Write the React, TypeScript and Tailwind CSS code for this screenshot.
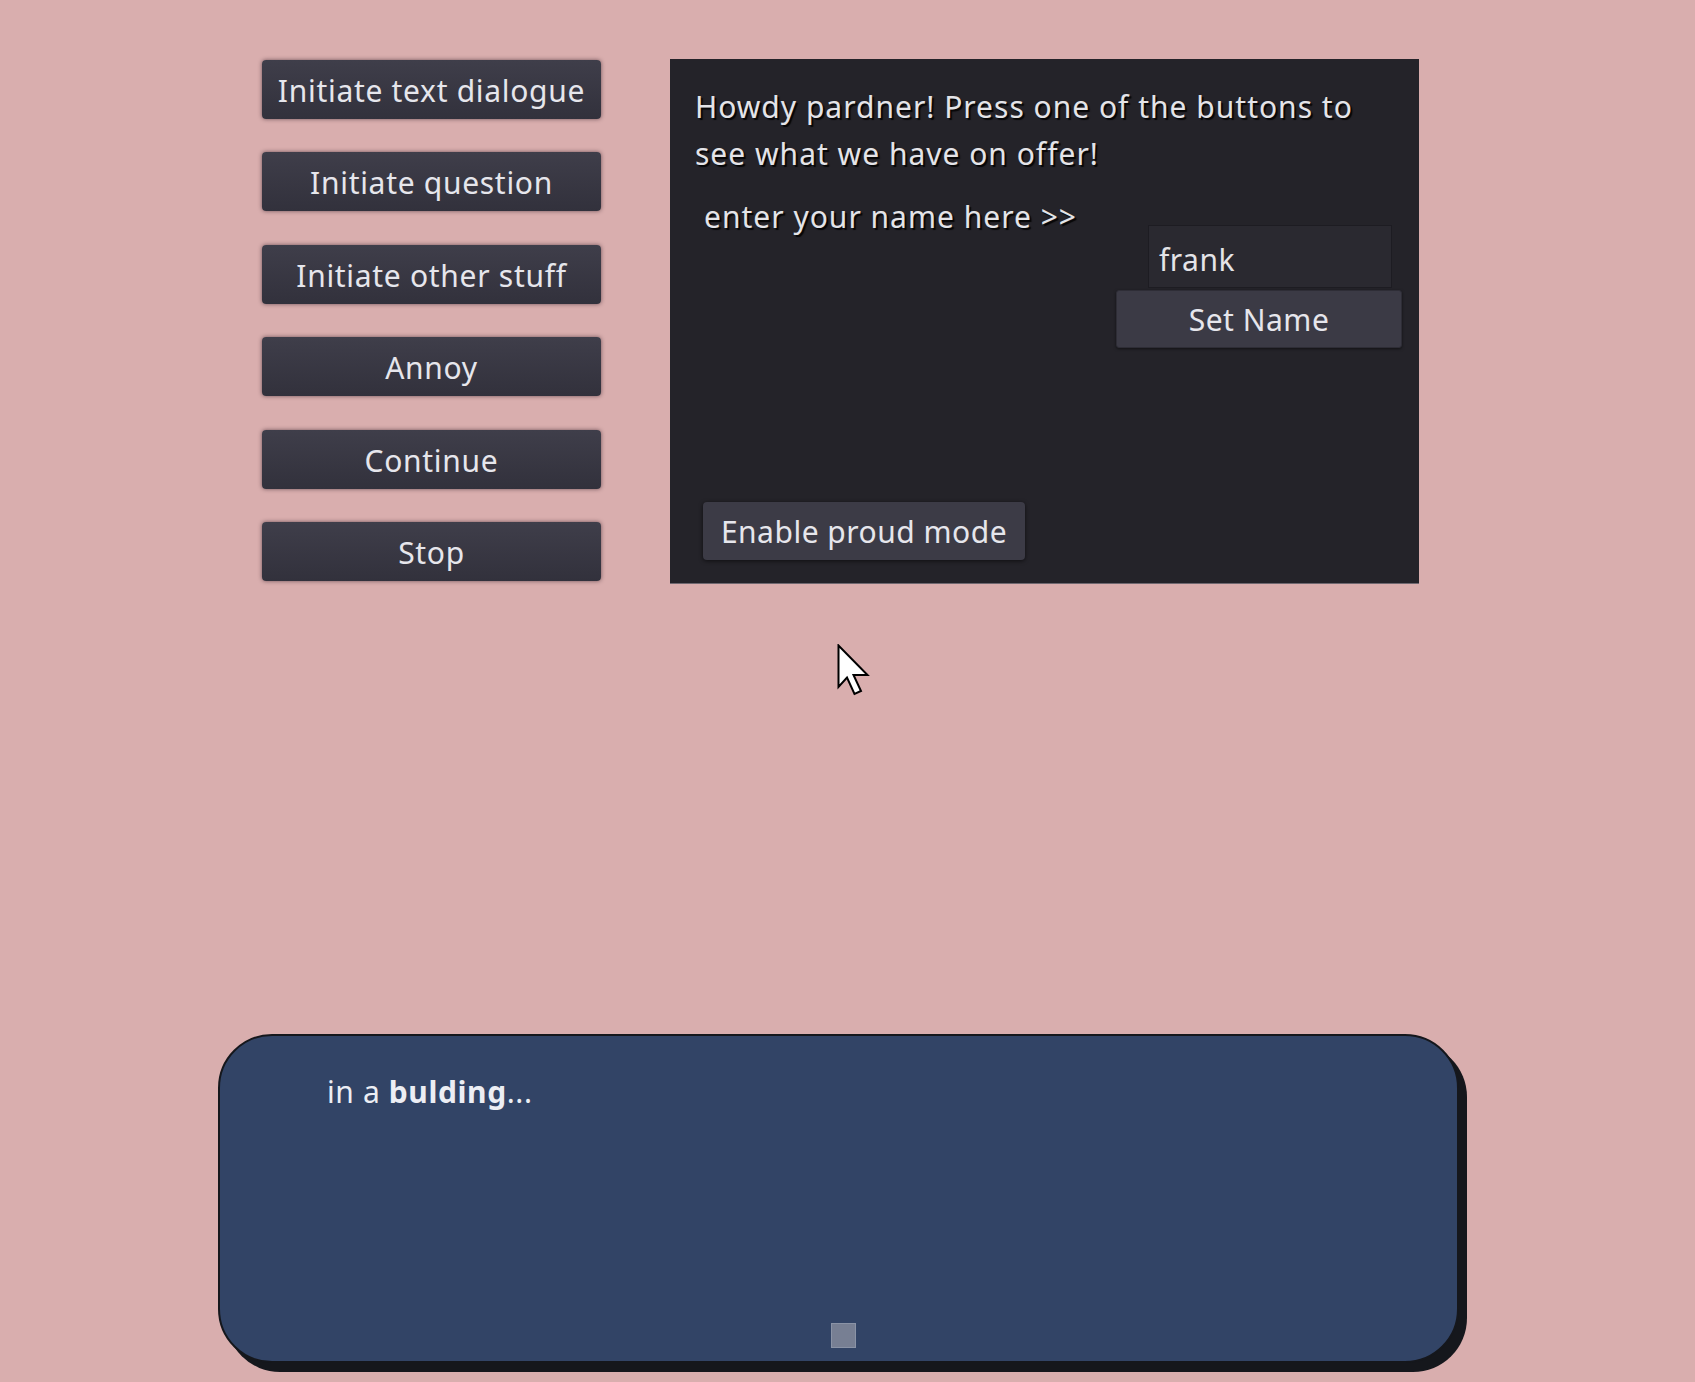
const buttons = [
  "Initiate text dialogue",
  "Initiate question",
  "Initiate other stuff",
  "Annoy",
  "Continue",
  "Stop",
];

function GameButton({ label }: { label: string }) {
  return (
    <button className="flex h-[59px] w-[339px] items-center justify-center rounded-[4px] bg-gradient-to-b from-[#3f3e4a] to-[#32313c] pt-[2px] text-[30px] tracking-[0.7px] text-[#e6e6ec] shadow-[0_0_4px_rgba(40,20,30,0.6)]">
      {label}
    </button>
  );
}

export default function App() {
  return (
    <div
      className="relative min-h-[1382px] w-full overflow-hidden bg-[#d9aeae] pt-[59px]"
      style={{ fontFamily: '"Noto Sans", "Open Sans", sans-serif' }}
    >
      <div className="flex items-start pl-[262px]">
        <div className="mt-[1px] flex w-[339px] flex-col gap-[33.4px]">
          {buttons.map((b) => (
            <GameButton key={b} label={b} />
          ))}
        </div>

        <div className="ml-[69px] flex h-[525px] w-[749px] flex-col border-b border-[#6f6870] bg-[#242329] pl-[25px] pr-[17px] pt-[24px] text-[30px] tracking-[1px] text-[#e4e4e8] [text-shadow:2px_2px_1px_rgba(0,0,0,0.85)]">
          <p className="leading-[47px]">
            Howdy pardner! Press one of the buttons to
            <br />
            see what we have on offer!
          </p>
          <div className="mt-[16px] flex items-start">
            <span className="pl-[9px] leading-[47px]">enter your name here &gt;&gt;</span>
            <div className="ml-auto mt-[32px] flex flex-col items-end">
              <div className="mr-[10px] flex h-[63px] w-[244px] items-center border border-[#1d1c22] bg-[#2a2930] pl-[10px] pt-[6px] tracking-[0.5px] [text-shadow:none]">
                frank
              </div>
              <button className="mt-[2px] flex h-[58px] w-[286px] items-center justify-center rounded-[3px] border border-[#2e2d36] bg-[#3b3a45] text-[30px] tracking-[0.5px] text-[#e6e6ec] shadow-[0_1px_3px_rgba(0,0,0,0.5)] [text-shadow:none]">
                Set Name
              </button>
            </div>
          </div>
          <button className="ml-[8px] mt-[154px] flex h-[58px] w-[322px] items-center justify-center rounded-[4px] bg-[#3c3b46] text-[30px] tracking-[0.5px] text-[#e6e6ec] shadow-[0_1px_4px_rgba(0,0,0,0.6)] [text-shadow:none]">
            Enable proud mode
          </button>
        </div>
      </div>

      <div className="ml-[218px] mt-[450px] flex h-[329px] w-[1241px] flex-col justify-between rounded-[54px] border-2 border-[#15171c] bg-[#324466] pb-[13px] pl-[107px] pt-[36px] shadow-[8px_9px_0_#15171c]">
        <p className="text-[30px] leading-[40px] tracking-[0.6px] text-[#eceef4]">
          in a <b className="font-bold">bulding</b>...
        </p>
        <div className="ml-[504px] h-[25px] w-[25px] border border-[#8a93a6] bg-[#777f93]" />
      </div>

      <svg
        className="absolute left-[837px] top-[644px]"
        width="34"
        height="52"
        viewBox="0 0 34 52"
      >
        <path
          d="M1.5 1.5 L1.5 43 L10 33.5 L17.5 50 L24 47 L16.5 31 L30.5 31 Z"
          fill="#ffffff"
          stroke="#000000"
          strokeWidth="2"
          strokeLinejoin="miter"
        />
      </svg>
    </div>
  );
}
